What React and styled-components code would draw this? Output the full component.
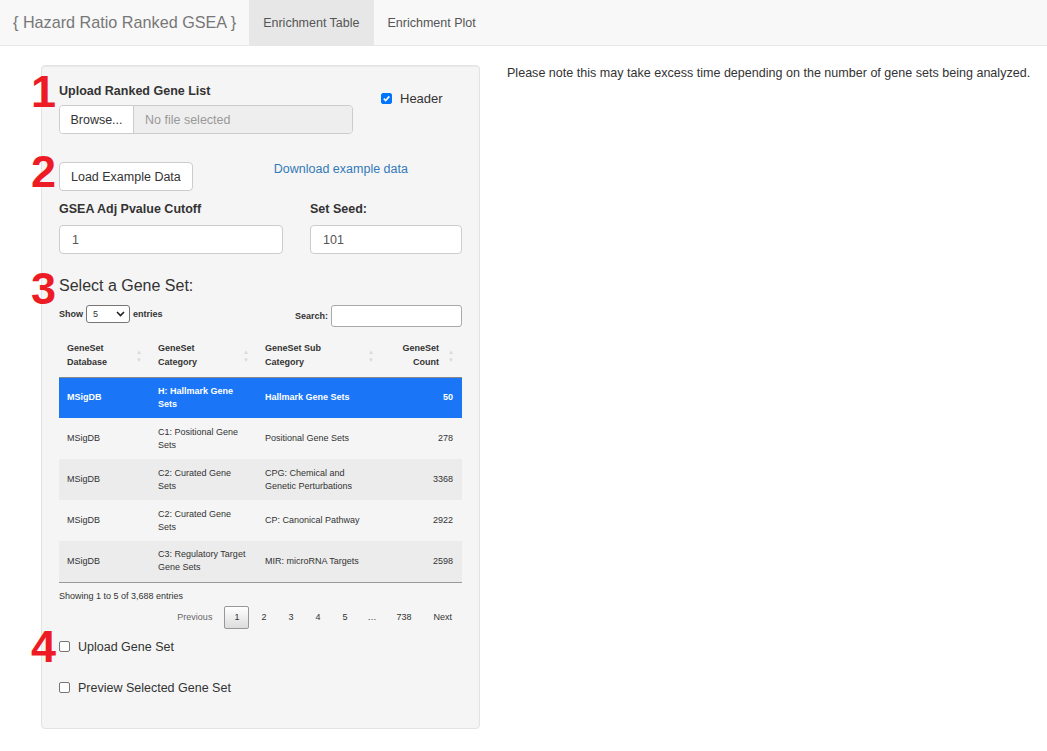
import React from 'react';
import styled, { createGlobalStyle } from 'styled-components';

const GlobalStyle = createGlobalStyle`
  html, body {
    margin: 0;
    padding: 0;
    background: #ffffff;
    font-family: "Liberation Sans", Arial, sans-serif;
    color: #333333;
  }
  * {
    box-sizing: border-box;
  }
`;

const Navbar = styled.div`
  height: 46px;
  background: #f8f8f8;
  border-bottom: 1px solid #e7e7e7;
  display: flex;
  align-items: stretch;
`;

const Brand = styled.div`
  padding: 0 13px;
  font-size: 16.2px;
  color: #777777;
  display: flex;
  align-items: center;
`;

const Tab = styled.div`
  padding: 0 14px;
  font-size: 12.5px;
  color: #555555;
  display: flex;
  align-items: center;
  background: ${props => (props.active ? '#e7e7e7' : 'transparent')};
`;

const Main = styled.div`
  display: flex;
  align-items: flex-start;
  padding: 19px 0 0 41px;
`;

const Well = styled.div`
  position: relative;
  width: 439px;
  min-height: 664px;
  background: #f5f5f5;
  border: 1px solid #e3e3e3;
  border-radius: 4px;
  box-shadow: inset 0 1px 1px rgba(0, 0, 0, 0.05);
  padding: 16px 17px 20px 17px;
`;

const Note = styled.p`
  margin: 0 0 0 27px;
  font-size: 12.55px;
  line-height: 16px;
  color: #333333;
`;

const Section = styled.div`
  position: relative;
`;

// red step numbers sit over the left edge of the panel
const Marker = styled.span`
  position: absolute;
  left: -28px;
  top: ${props => props.top}px;
  font-size: 45px;
  line-height: 1;
  font-weight: bold;
  color: #ed1c24;
`;

const Row = styled.div`
  display: flex;
  align-items: flex-start;
`;

const Label = styled.div`
  font-size: 12.5px;
  font-weight: bold;
  line-height: 18px;
  margin-bottom: ${props => props.mb || 5}px;
`;

const FileGroup = styled.div`
  display: flex;
  width: 294px;
  height: 29px;
  border: 1px solid #cccccc;
  border-radius: 4px;
  overflow: hidden;
`;

const BrowseButton = styled.div`
  width: 74px;
  background: #ffffff;
  border-right: 1px solid #cccccc;
  font-size: 12.5px;
  color: #333333;
  display: flex;
  align-items: center;
  justify-content: center;
`;

const FileName = styled.div`
  flex: 1;
  background: #eeeeee;
  font-size: 12.5px;
  color: #999999;
  display: flex;
  align-items: center;
  padding-left: 11px;
`;

const CheckLabel = styled.label`
  display: flex;
  align-items: center;
  gap: 8px;
  font-size: ${props => props.size || 13}px;
  color: #333333;
  margin: ${props => props.margin || '0'};
`;

const Box = styled.span`
  width: 11px;
  height: 11px;
  border-radius: 2px;
  display: inline-flex;
  align-items: center;
  justify-content: center;
  background: ${props => (props.checked ? '#0075ff' : '#ffffff')};
  border: 1px solid ${props => (props.checked ? '#0075ff' : '#767676')};
`;

const Button = styled.div`
  display: inline-flex;
  align-items: center;
  height: 29px;
  padding: 0 11px;
  background: #ffffff;
  border: 1px solid #cccccc;
  border-radius: 4px;
  font-size: 12.5px;
  color: #333333;
`;

const Link = styled.a`
  font-size: 12.5px;
  color: #337ab7;
  text-decoration: none;
  margin: 0 0 0 81px;
  line-height: 16px;
  position: relative;
  top: -1px;
`;

const Field = styled.div`
  width: ${props => props.width}px;
  margin-right: ${props => props.gap || 0}px;
`;

const TextInput = styled.div`
  height: 29px;
  border: 1px solid #cccccc;
  border-radius: 4px;
  background: #ffffff;
  font-size: 12.5px;
  color: #555555;
  display: flex;
  align-items: center;
  padding-left: 12px;
`;

const Heading = styled.div`
  font-size: 16px;
  line-height: 20px;
  color: #333333;
  margin: 0 0 9px 0;
`;

const Controls = styled.div`
  display: flex;
  justify-content: space-between;
  align-items: flex-start;
  font-size: 9px;
  font-weight: bold;
`;

const ShowLen = styled.div`
  display: flex;
  align-items: center;
  gap: 3px;
  height: 18px;
`;

const Select = styled.div`
  width: 44px;
  height: 18px;
  border: 1px solid #767676;
  border-radius: 3px;
  background: #ffffff;
  display: flex;
  align-items: center;
  justify-content: space-between;
  padding: 0 4px 0 6px;
  font-weight: normal;
  font-size: 9px;
`;

const SearchBox = styled.div`
  display: flex;
  align-items: center;
  gap: 3px;
`;

const SearchInput = styled.div`
  width: 131px;
  height: 22px;
  border: 1px solid #aaaaaa;
  border-radius: 3px;
  background: #ffffff;
`;

const Table = styled.table`
  width: 100%;
  border-collapse: collapse;
  margin-top: 8px;
  font-size: 9px;
  border-bottom: 1px solid #999999;
`;

const Th = styled.th`
  position: relative;
  text-align: ${props => (props.right ? 'right' : 'left')};
  font-weight: bold;
  line-height: 14px;
  padding: 6px 23px 7px 8px;
  height: 42px;
  border-bottom: 1px solid #888888;
  width: ${props => props.width}px;
  vertical-align: middle;
`;

const SortArrows = styled.span`
  position: absolute;
  right: 8px;
  top: 50%;
  transform: translateY(-50%);
  display: flex;
  flex-direction: column;
  gap: 2px;
  font-size: 6px;
  line-height: 6px;
  color: #dadada;
`;

const Tr = styled.tr`
  background: ${props => (props.selected ? '#1a76f7' : props.odd ? '#ececec' : 'transparent')};
  color: ${props => (props.selected ? '#ffffff' : '#333333')};
  & + & td {
    border-top: 1px solid #dddddd;
  }
`;

const Td = styled.td`
  height: 41px;
  line-height: 13px;
  padding: 0 9px 0 8px;
  vertical-align: middle;
  text-align: ${props => (props.right ? 'right' : 'left')};
  font-weight: ${props => (props.bold ? 'bold' : 'normal')};
`;

const Info = styled.div`
  font-size: 9px;
  line-height: 12px;
  margin-top: 7px;
`;

const Pager = styled.div`
  display: flex;
  justify-content: flex-end;
  align-items: center;
  gap: 2px;
  margin-top: 4px;
  font-size: 9px;
`;

const PageButton = styled.span`
  height: 23px;
  padding: 0 ${props => (props.ellipsis ? 7 : 9)}px;
  display: inline-flex;
  align-items: center;
  color: ${props => (props.disabled ? '#666666' : '#333333')};
  border: 1px solid ${props => (props.current ? '#979797' : 'transparent')};
  border-radius: 2px;
  background: ${props =>
    props.current ? 'linear-gradient(to bottom, #ffffff 0%, #dcdcdc 100%)' : 'transparent'};
`;

const ArrowIcon = () => (
  <svg width="9" height="6" viewBox="0 0 9 6">
    <path d="M1 1 L4.5 4.5 L8 1" stroke="#222" strokeWidth="1.6" fill="none" />
  </svg>
);

const Tick = () => (
  <svg width="9" height="9" viewBox="0 0 9 9">
    <path d="M1.8 4.6 L3.7 6.5 L7.3 2.4" stroke="#fff" strokeWidth="1.6" fill="none" />
  </svg>
);

const Sort = () => (
  <SortArrows>
    <span>▲</span>
    <span>▼</span>
  </SortArrows>
);

const rows = [
  ['MSigDB', 'H: Hallmark Gene Sets', 'Hallmark Gene Sets', '50'],
  ['MSigDB', 'C1: Positional Gene Sets', 'Positional Gene Sets', '278'],
  ['MSigDB', 'C2: Curated Gene Sets', 'CPG: Chemical and Genetic Perturbations', '3368'],
  ['MSigDB', 'C2: Curated Gene Sets', 'CP: Canonical Pathway', '2922'],
  ['MSigDB', 'C3: Regulatory Target Gene Sets', 'MIR: microRNA Targets', '2598'],
];

const pages = ['1', '2', '3', '4', '5', '…', '738'];

const App = () => (
  <>
    <GlobalStyle />
    <Navbar>
      <Brand>{'{ Hazard Ratio Ranked GSEA }'}</Brand>
      <Tab active>Enrichment Table</Tab>
      <Tab>Enrichment Plot</Tab>
    </Navbar>
    <Main>
      <Well>
        <Section>
          <Marker top={-13}>1</Marker>
          <Row>
            <div>
              <Label>Upload Ranked Gene List</Label>
              <FileGroup>
                <BrowseButton>Browse...</BrowseButton>
                <FileName>No file selected</FileName>
              </FileGroup>
            </div>
            <CheckLabel margin="9px 0 0 28px">
              <Box checked>
                <Tick />
              </Box>
              Header
            </CheckLabel>
          </Row>
        </Section>

        <Section style={{ marginTop: 28 }}>
          <Marker top={-13}>2</Marker>
          <Row>
            <Button>Load Example Data</Button>
            <Link href="#">Download example data</Link>
          </Row>
        </Section>

        <Row style={{ marginTop: 9 }}>
          <Field width={224} gap={27}>
            <Label mb={7}>GSEA Adj Pvalue Cutoff</Label>
            <TextInput>1</TextInput>
          </Field>
          <Field width={152}>
            <Label mb={7}>Set Seed:</Label>
            <TextInput>101</TextInput>
          </Field>
        </Row>

        <Section style={{ marginTop: 22 }}>
          <Marker top={-10}>3</Marker>
          <Heading>Select a Gene Set:</Heading>
          <Controls>
            <ShowLen>
              Show
              <Select>
                5
                <ArrowIcon />
              </Select>
              entries
            </ShowLen>
            <SearchBox>
              Search:
              <SearchInput />
            </SearchBox>
          </Controls>
          <Table>
            <thead>
              <tr>
                <Th width={91}>
                  GeneSet
                  <br />
                  Database
                  <Sort />
                </Th>
                <Th width={107}>
                  GeneSet
                  <br />
                  Category
                  <Sort />
                </Th>
                <Th width={125}>
                  GeneSet Sub
                  <br />
                  Category
                  <Sort />
                </Th>
                <Th right>
                  GeneSet
                  <br />
                  Count
                  <Sort />
                </Th>
              </tr>
            </thead>
            <tbody>
              {rows.map((r, i) => (
                <Tr key={i} selected={i === 0} odd={i % 2 === 0}>
                  <Td bold={i === 0}>{r[0]}</Td>
                  <Td bold={i === 0}>{r[1]}</Td>
                  <Td bold={i === 0}>{r[2]}</Td>
                  <Td right bold={i === 0}>
                    {r[3]}
                  </Td>
                </Tr>
              ))}
            </tbody>
          </Table>
          <Info>Showing 1 to 5 of 3,688 entries</Info>
          <Pager>
            <PageButton disabled>Previous</PageButton>
            {pages.map(p => (
              <PageButton key={p} current={p === '1'} ellipsis={p === '…'}>
                {p}
              </PageButton>
            ))}
            <PageButton>Next</PageButton>
          </Pager>
        </Section>

        <Section style={{ marginTop: 11 }}>
          <Marker top={-16}>4</Marker>
          <CheckLabel size={12.5}>
            <Box />
            Upload Gene Set
          </CheckLabel>
          <CheckLabel size={12.5} margin="27px 0 0 0">
            <Box />
            Preview Selected Gene Set
          </CheckLabel>
        </Section>
      </Well>
      <Note>Please note this may take excess time depending on the number of gene sets being analyzed.</Note>
    </Main>
  </>
);

export default App;
